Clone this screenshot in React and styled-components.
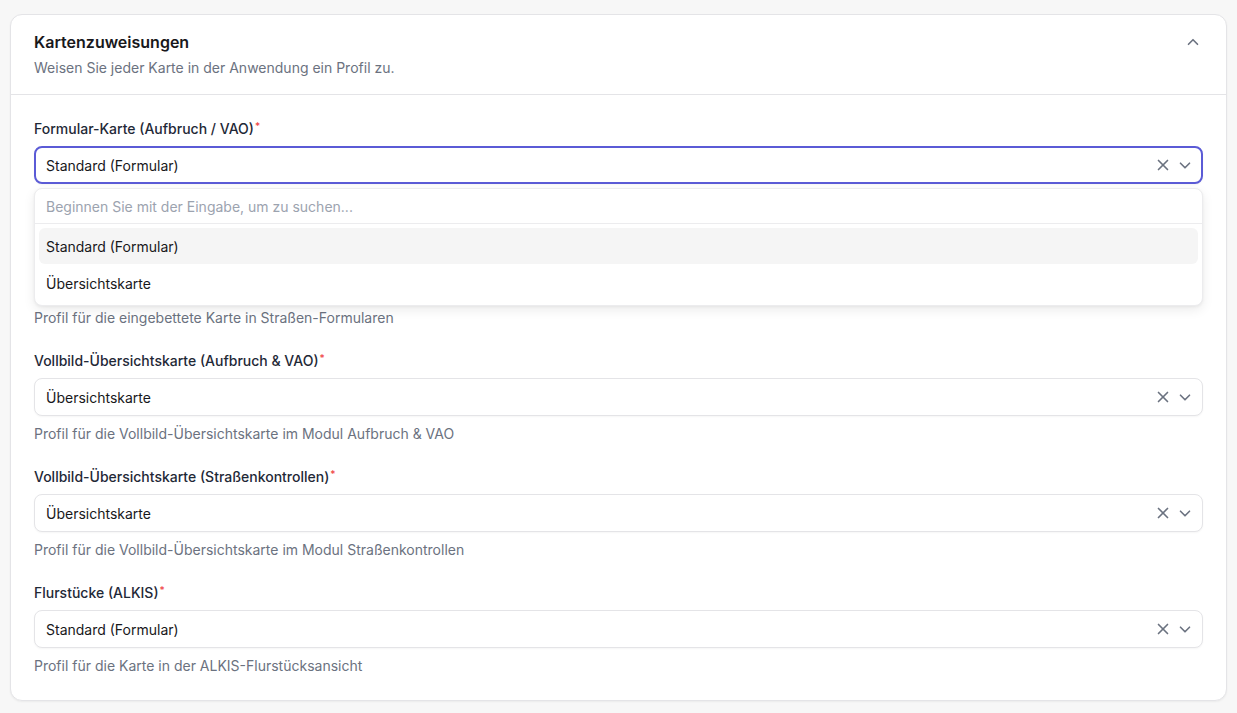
import React from "react";
import styled, { createGlobalStyle } from "styled-components";

const Global = createGlobalStyle`
  html, body { margin: 0; padding: 0; background: #f7f7f7; }
  body { font-family: Inter, "Noto Sans", sans-serif; color: #1a1a1a; -webkit-font-smoothing: antialiased; }
  * { box-sizing: border-box; }
`;

const Page = styled.div`
  padding: 14px 10px 14px 10px;
`;

const Card = styled.section`
  background: #fff;
  border: 1px solid #e4e4e7;
  border-radius: 12px;
  box-shadow: 0 1px 2px rgba(0,0,0,0.05);
`;

const Header = styled.header`
  display: flex;
  justify-content: space-between;
  align-items: flex-start;
  padding: 15px 24px 16px 23px;
  border-bottom: 1px solid #e4e4e7;
`;

const HeadText = styled.div`
  display: flex;
  flex-direction: column;
  gap: 4px;
`;

const Title = styled.h2`
  margin: 0;
  font-size: 16px;
  line-height: 24px;
  font-weight: 600;
  color: #18181b;
`;

const Desc = styled.p`
  margin: 0;
  font-size: 14px;
  line-height: 20px;
  color: #6b7280;
`;

const CollapseBtn = styled.button`
  border: 0;
  background: none;
  padding: 0;
  margin-top: 3px;
  color: #6b7280;
  display: flex;
  cursor: pointer;
`;

const Body = styled.div`
  padding: 24px 23px 24px 23px;
  display: flex;
  flex-direction: column;
  gap: 23px;
`;

const Field = styled.div`
  display: flex;
  flex-direction: column;
`;

const Label = styled.label`
  font-size: 14px;
  line-height: 20px;
  font-weight: 500;
  color: #1f2937;
  margin-bottom: 7px;
`;

const Req = styled.span`
  color: #ef4444;
  font-size: 10px;
  vertical-align: top;
  position: relative;
  top: -3px;
  margin-left: 1px;
`;

const SelectBox = styled.div`
  height: 38px;
  display: flex;
  align-items: center;
  border: ${(p) => (p.$focused ? "2px solid #5b5bd6" : "1px solid #e4e4e7")};
  border-radius: 8px;
  padding: 0 ${(p) => (p.$focused ? "7px" : "8px")} 0 ${(p) => (p.$focused ? "10px" : "11px")};
  background: #fff;
  box-shadow: 0 1px 2px rgba(0,0,0,0.04);
`;

const Value = styled.span`
  flex: 1;
  font-size: 14px;
  color: #18181b;
`;

const Icons = styled.div`
  display: flex;
  align-items: center;
  gap: 4px;
  color: #6b7280;
`;

const IconSlot = styled.span`
  display: flex;
  align-items: center;
  justify-content: center;
  width: ${(p) => p.$w}px;
`;

const Help = styled.p`
  margin: ${(p) => (p.$tight ? "2px" : "8px")} 0 0;
  font-size: 14px;
  line-height: 20px;
  color: #6b7280;
`;

const Dropdown = styled.div`
  margin-top: 4px;
  border: 1px solid #ececee;
  border-radius: 8px;
  background: #fff;
  box-shadow: 0 4px 12px rgba(0,0,0,0.08), 0 1px 3px rgba(0,0,0,0.05);
  position: relative;
  z-index: 2;
`;

const Search = styled.div`
  height: 35px;
  display: flex;
  align-items: center;
  padding: 0 11px;
  font-size: 14px;
  color: #9ca3af;
  border-bottom: 1px solid #ececee;
`;

const List = styled.div`
  display: flex;
  flex-direction: column;
  gap: 1px;
  padding: 4px;
`;

const Option = styled.div`
  height: 36px;
  display: flex;
  align-items: center;
  padding: 0 7px;
  border-radius: 6px;
  font-size: 14px;
  color: #18181b;
  background: ${(p) => (p.$active ? "#f5f5f5" : "transparent")};
`;

const XIcon = ({ size }) => (
  <svg width={size} height={size} viewBox="0 0 24 24" fill="none" stroke="currentColor" strokeWidth="2.2" strokeLinecap="round" strokeLinejoin="round">
    <path d="M18 6 6 18" />
    <path d="m6 6 12 12" />
  </svg>
);

const Chevron = ({ size, up }) => (
  <svg width={size} height={size} viewBox="0 0 24 24" fill="none" stroke="currentColor" strokeWidth="2.2" strokeLinecap="round" strokeLinejoin="round">
    <path d={up ? "m18 15-6-6-6 6" : "m6 9 6 6 6-6"} />
  </svg>
);

const fields = [
  {
    label: "Formular-Karte (Aufbruch / VAO)",
    value: "Standard (Formular)",
    help: "Profil für die eingebettete Karte in Straßen-Formularen",
    open: true,
  },
  {
    label: "Vollbild-Übersichtskarte (Aufbruch & VAO)",
    value: "Übersichtskarte",
    help: "Profil für die Vollbild-Übersichtskarte im Modul Aufbruch & VAO",
  },
  {
    label: "Vollbild-Übersichtskarte (Straßenkontrollen)",
    value: "Übersichtskarte",
    help: "Profil für die Vollbild-Übersichtskarte im Modul Straßenkontrollen",
  },
  {
    label: "Flurstücke (ALKIS)",
    value: "Standard (Formular)",
    help: "Profil für die Karte in der ALKIS-Flurstücksansicht",
  },
];

const options = ["Standard (Formular)", "Übersichtskarte"];

export default function App() {
  return (
    <Page>
      <Global />
      <Card>
        <Header>
          <HeadText>
            <Title>Kartenzuweisungen</Title>
            <Desc>Weisen Sie jeder Karte in der Anwendung ein Profil zu.</Desc>
          </HeadText>
          <CollapseBtn aria-label="Einklappen">
            <Chevron size={18} up />
          </CollapseBtn>
        </Header>
        <Body>
          {fields.map((f) => (
            <Field key={f.label}>
              <Label>
                {f.label}
                <Req>*</Req>
              </Label>
              <SelectBox $focused={f.open}>
                <Value>{f.value}</Value>
                <Icons>
                  <IconSlot $w={18}>
                    <XIcon size={18} />
                  </IconSlot>
                  <IconSlot $w={18}>
                    <Chevron size={19} />
                  </IconSlot>
                </Icons>
              </SelectBox>
              {f.open && (
                <Dropdown>
                  <Search>Beginnen Sie mit der Eingabe, um zu suchen...</Search>
                  <List>
                    {options.map((o, i) => (
                      <Option key={o} $active={i === 0}>
                        {o}
                      </Option>
                    ))}
                  </List>
                </Dropdown>
              )}
              <Help $tight={f.open}>{f.help}</Help>
            </Field>
          ))}
        </Body>
      </Card>
    </Page>
  );
}
